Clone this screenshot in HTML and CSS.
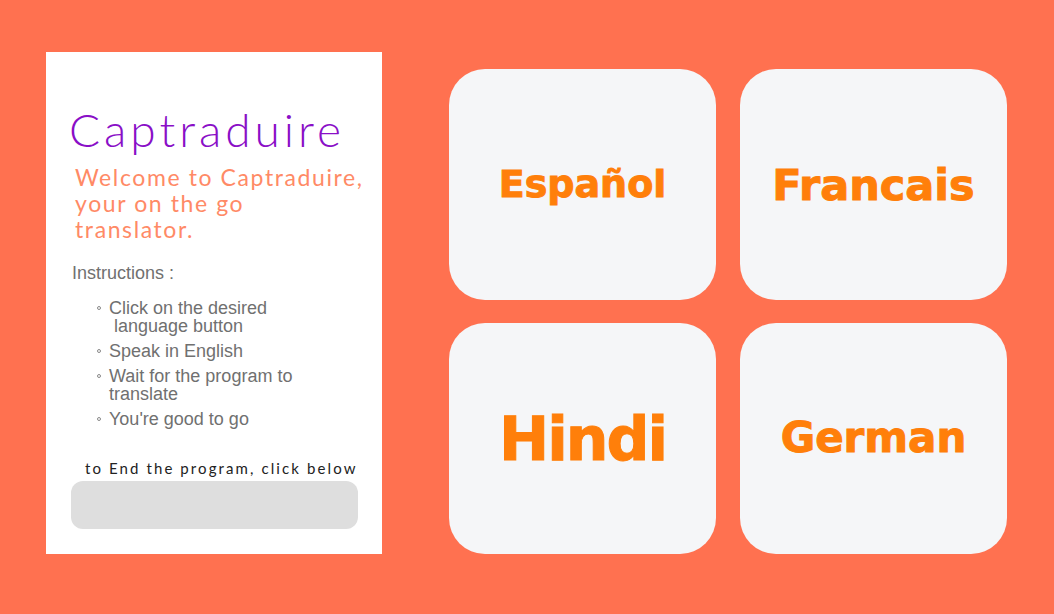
FILE: index.html
```html
<!DOCTYPE html>
<html lang="en">
<head>
<meta charset="utf-8">
<title>Captraduire</title>
<link rel="stylesheet" href="styles.css">
</head>
<body>
<main class="page">
  <aside class="panel">
    <h1 class="title">Captraduire</h1>
    <p class="welcome">Welcome to Captraduire, your on the go translator.</p>
    <p class="instr-label">Instructions :</p>
    <ul class="steps">
      <li>Click on the desired<br>&nbsp;language button</li>
      <li>Speak in English</li>
      <li>Wait for the program to translate</li>
      <li>You're good to go</li>
    </ul>
    <p class="end-label">to End the program, click below</p>
    <button class="end-btn" type="button"></button>
  </aside>
  <section class="langs">
    <button class="lang lang-es" type="button">Español</button>
    <button class="lang lang-fr" type="button">Francais</button>
    <button class="lang lang-hi" type="button">Hindi</button>
    <button class="lang lang-de" type="button">German</button>
  </section>
</main>
</body>
</html>
```

FILE: styles.css
```css
html, body {
  margin: 0;
  padding: 0;
}
body {
  background: #ff7150;
  width: 1054px;
  height: 614px;
  overflow: hidden;
}
.page {
  display: flex;
  align-items: flex-start;
  padding: 52px 0 0 46px;
}
.panel {
  box-sizing: border-box;
  width: 336px;
  height: 502px;
  background: #ffffff;
  padding: 0 10px 0 23px;
  display: flex;
  flex-direction: column;
}
.title {
  margin: 50px 0 0 0;
  font-family: "Lato", "DejaVu Sans", sans-serif;
  font-weight: 300;
  font-size: 46px;
  line-height: 56px;
  color: #8a0fc7;
  letter-spacing: 4px;
}
.welcome {
  margin: 6px 0 0 6px;
  font-family: "Lato", "DejaVu Sans", sans-serif;
  font-weight: 400;
  font-size: 23px;
  line-height: 26px;
  color: #ff8a66;
  letter-spacing: 1.6px;
  width: 290px;
}
.instr-label {
  margin: 21px 0 0 3px;
  font-family: "Liberation Sans", Arial, sans-serif;
  font-size: 18px;
  line-height: 20px;
  color: #707070;
}
.steps {
  margin: 16px 0 0 0;
  padding: 0 0 0 40px;
  list-style: none;
  font-family: "Liberation Sans", Arial, sans-serif;
  font-size: 18px;
  line-height: 18px;
  color: #707070;
}
.steps li {
  position: relative;
  margin-bottom: 7px;
  width: 210px;
}
.steps li::before {
  content: "";
  position: absolute;
  left: -12px;
  top: 7px;
  width: 4px;
  height: 4px;
  border: 1px solid #8a8a8a;
  border-radius: 50%;
  box-sizing: border-box;
}
.end-label {
  margin: 24px 0 0 16px;
  font-family: "Lato", "DejaVu Sans", sans-serif;
  font-size: 15px;
  line-height: 18px;
  color: #222;
  letter-spacing: 2.1px;
  white-space: nowrap;
}
.end-btn {
  margin: 4px 0 0 2px;
  width: 287px;
  height: 48px;
  border: none;
  border-radius: 12px;
  background: #dedede;
  padding: 0;
}
.langs {
  margin: 17px 0 0 67px;
  display: grid;
  grid-template-columns: 267px 267px;
  grid-template-rows: 231px 231px;
  column-gap: 24px;
  row-gap: 23px;
}
.lang {
  border: none;
  border-radius: 36px;
  background: #f5f6f8;
  color: #ff7f0a;
  font-family: "DejaVu Sans", "Lato", sans-serif;
  font-weight: bold;
  -webkit-text-stroke: 1px #ff7f0a;
  padding: 0;
  display: flex;
  align-items: center;
  justify-content: center;
}
.lang-es { font-size: 38px; padding-bottom: 2px; }
.lang-fr { font-size: 43px; padding-bottom: 0; }
.lang-hi { font-size: 60px; padding-bottom: 0; letter-spacing: -2px; }
.lang-de { font-size: 42px; padding-bottom: 3px; }
```
